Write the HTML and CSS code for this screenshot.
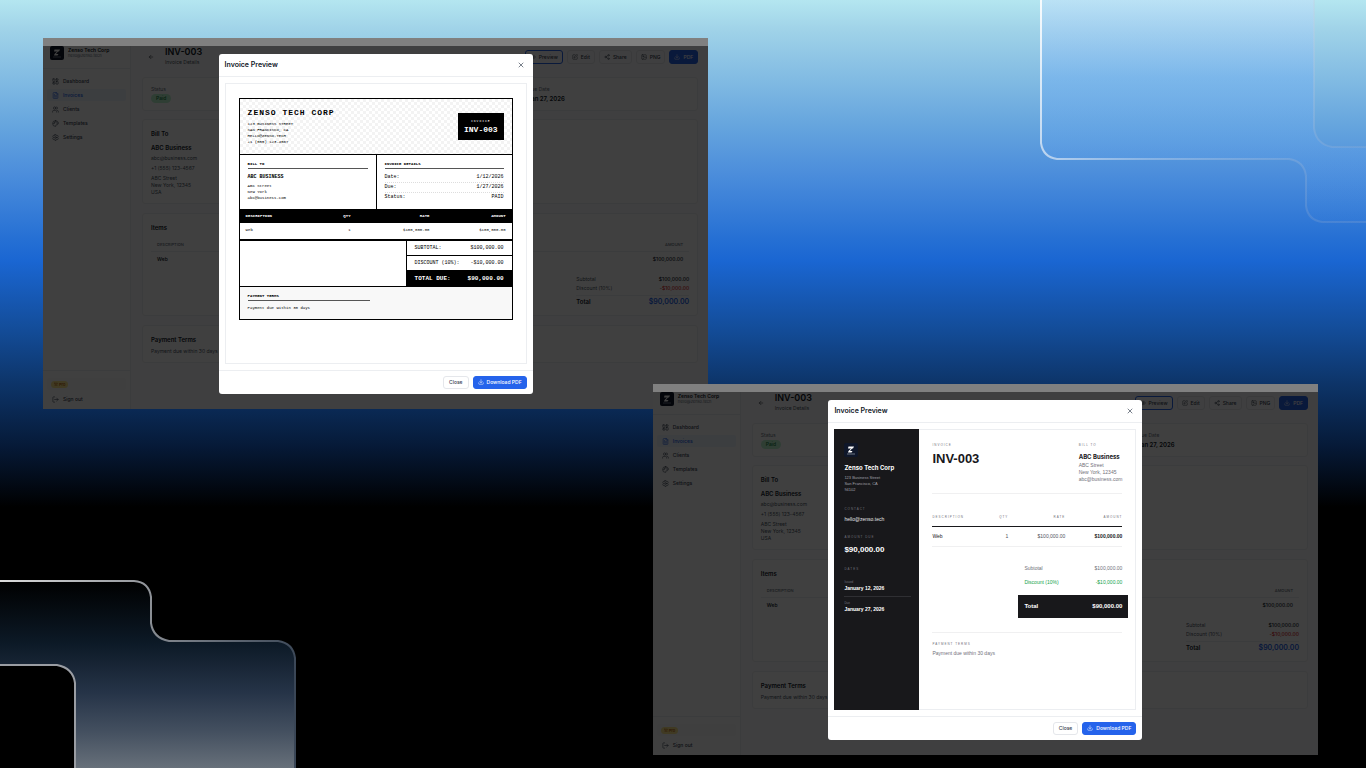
FILE: index.html
```
<!DOCTYPE html>
<html lang="en">
<head>
  <meta charset="UTF-8">
  <meta name="viewport" content="width=device-width, initial-scale=1.0">
  <title>Invoice Preview</title>
  <link rel="stylesheet" href="styles.css">
</head>
<body>
  <svg class="sprite" aria-hidden="true">
    <symbol id="i-dashboard" viewBox="0 0 24 24"><rect x="3" y="3" width="7" height="9" rx="1"/><rect x="14" y="3" width="7" height="5" rx="1"/><rect x="14" y="12" width="7" height="9" rx="1"/><rect x="3" y="16" width="7" height="5" rx="1"/></symbol>
    <symbol id="i-file" viewBox="0 0 24 24"><path d="M15 2H6a2 2 0 0 0-2 2v16a2 2 0 0 0 2 2h12a2 2 0 0 0 2-2V7z"/><path d="M14 2v5h6M9 9H8M16 13H8M16 17H8"/></symbol>
    <symbol id="i-users" viewBox="0 0 24 24"><path d="M16 21v-2a4 4 0 0 0-4-4H6a4 4 0 0 0-4 4v2"/><circle cx="9" cy="7" r="4"/><path d="M22 21v-2a4 4 0 0 0-3-3.9M16 3.1a4 4 0 0 1 0 7.8"/></symbol>
    <symbol id="i-palette" viewBox="0 0 24 24"><path d="M12 2a10 10 0 0 0 0 20c1 0 1.700-.7 1.700-1.700 0-.4-.2-.8-.4-1.100-.3-.3-.4-.7-.4-1.100a1.600 1.600 0 0 1 1.600-1.700h2c3 0 5.500-2.500 5.500-5.500C22 6 17.500 2 12 2z"/><circle cx="13.500" cy="6.500" r=".5"/><circle cx="17.500" cy="10.500" r=".5"/><circle cx="8.500" cy="7.500" r=".5"/><circle cx="6.500" cy="12.500" r=".5"/></symbol>
    <symbol id="i-settings" viewBox="0 0 24 24"><path d="M10 2h4l.6 3 2 1.200 3-1 2 3.500-2.300 2v2.600l2.300 2-2 3.500-3-1-2 1.200-.6 3h-4l-.6-3-2-1.200-3 1-2-3.500 2.300-2v-2.600l-2.300-2 2-3.500 3 1 2-1.200z"/><circle cx="12" cy="12" r="3"/></symbol>
    <symbol id="i-logout" viewBox="0 0 24 24"><path d="M9 21H5a2 2 0 0 1-2-2V5a2 2 0 0 1 2-2h4M16 17l5-5-5-5M21 12H9"/></symbol>
    <symbol id="i-back" viewBox="0 0 24 24"><path d="m12 19-7-7 7-7M19 12H5"/></symbol>
    <symbol id="i-eye" viewBox="0 0 24 24"><path d="M2 12s3.500-7 10-7 10 7 10 7-3.500 7-10 7-10-7-10-7z"/><circle cx="12" cy="12" r="3"/></symbol>
    <symbol id="i-edit" viewBox="0 0 24 24"><path d="M12 3H5a2 2 0 0 0-2 2v14a2 2 0 0 0 2 2h14a2 2 0 0 0 2-2v-7"/><path d="M18.400 2.600a2.100 2.100 0 0 1 3 3L12 15l-4 1 1-4z"/></symbol>
    <symbol id="i-share" viewBox="0 0 24 24"><circle cx="18" cy="5" r="3"/><circle cx="6" cy="12" r="3"/><circle cx="18" cy="19" r="3"/><path d="m8.600 13.500 6.800 4M15.400 6.500l-6.800 4"/></symbol>
    <symbol id="i-image" viewBox="0 0 24 24"><rect x="3" y="3" width="18" height="18" rx="2"/><circle cx="9" cy="9" r="2"/><path d="m21 15-3-3a2 2 0 0 0-3 0l-9 9"/></symbol>
    <symbol id="i-download" viewBox="0 0 24 24"><path d="M21 15v4a2 2 0 0 1-2 2H5a2 2 0 0 1-2-2v-4M7 10l5 5 5-5M12 15V3"/></symbol>
    <symbol id="i-crown" viewBox="0 0 24 24"><path d="m2 5 4 11h12l4-11-6 6-4-8-4 8zM5 21h14"/></symbol>
    <symbol id="i-close" viewBox="0 0 24 24"><path d="M18 6 6 18M6 6l12 12"/></symbol>
    <symbol id="i-logo" viewBox="0 0 28 28"><path class="logo-mark" d="M9 7h11l-2 4h-2l-4 5h5l-2 3H8l1-3 5-5H8z"/><path class="logo-line" d="M6 22h16"/></symbol>
  </svg>

  <svg class="decor decor-top" width="326" height="224" viewBox="0 0 326 224" aria-hidden="true">
    <defs>
      <linearGradient id="topFill" x1="0" y1="0" x2="0" y2="1">
        <stop offset="0" stop-color="#c2dcfb" stop-opacity=".45"/>
        <stop offset=".35" stop-color="#74b2f2" stop-opacity=".5"/>
        <stop offset="1" stop-color="#4a90e8" stop-opacity=".05"/>
      </linearGradient>
      <linearGradient id="topLine" gradientUnits="userSpaceOnUse" x1="0" y1="0" x2="300" y2="170">
        <stop offset="0" stop-color="#fff" stop-opacity=".9"/>
        <stop offset=".5" stop-color="#d5e0ee" stop-opacity=".4"/>
        <stop offset="1" stop-color="#a9b7cf" stop-opacity=".2"/>
      </linearGradient>
    </defs>
    <path fill="url(#topFill)" d="M0 0V143Q2 157 17 159H249Q264 161 266 176V206Q268 220 282 222H326V147H292Q276 144 274 128V0z"/>
    <path class="decor-line" stroke="url(#topLine)" d="M1 0V143Q3 157 17 159H249Q264 161 266 176V206Q268 220 282 222H326M274 0V128Q276 144 292 147H326"/>
  </svg>

  <svg class="decor decor-bottom" width="297" height="189" viewBox="0 0 297 189" aria-hidden="true">
    <defs>
      <linearGradient id="botFill" x1="0" y1="0" x2="0" y2="1">
        <stop offset="0" stop-color="#000"/>
        <stop offset=".33" stop-color="#0c1926"/>
        <stop offset=".6" stop-color="#263448"/>
        <stop offset=".8" stop-color="#434f5f"/>
        <stop offset="1" stop-color="#67707a"/>
      </linearGradient>
      <linearGradient id="botLine" gradientUnits="userSpaceOnUse" x1="0" y1="0" x2="297" y2="90">
        <stop offset="0" stop-color="#dcdcdc"/>
        <stop offset=".5" stop-color="#8a8e94"/>
        <stop offset="1" stop-color="#3a4656"/>
      </linearGradient>
    </defs>
    <path fill="url(#botFill)" d="M0 2H134Q149 3 151 18V44Q153 59 169 62H278Q293 64 295 79V189H75V104Q73 89 57 86H0z"/>
    <path class="decor-line" stroke="url(#botLine)" d="M0 2H134Q149 3 151 18V44Q153 59 169 62H278Q293 64 295 79V189"/>
    <path class="decor-line" stroke="#9a9da3" d="M0 86H57Q73 89 75 104V189"/>
  </svg>

  <template id="appShell">
    <div class="strip"></div>
    <div class="shell">
      <aside class="sidebar">
        <div class="brand">
          <svg class="logo"><use href="#i-logo"/></svg>
          <div>
            <div class="brand-name">Zenso Tech Corp</div>
            <div class="brand-mail">hello@zenso.tech</div>
          </div>
        </div>
        <nav class="nav">
          <a href="#"><svg class="icon"><use href="#i-dashboard"/></svg>Dashboard</a>
          <a href="#" class="active"><svg class="icon"><use href="#i-file"/></svg>Invoices</a>
          <a href="#"><svg class="icon"><use href="#i-users"/></svg>Clients</a>
          <a href="#"><svg class="icon"><use href="#i-palette"/></svg>Templates</a>
          <a href="#"><svg class="icon"><use href="#i-settings"/></svg>Settings</a>
        </nav>
        <div class="sidebar-foot">
          <div class="plan"><span class="pro"><svg class="icon"><use href="#i-crown"/></svg>Pro</span></div>
          <button class="signout"><svg class="icon"><use href="#i-logout"/></svg>Sign out</button>
        </div>
      </aside>
      <main class="main">
        <header class="page-head">
          <a href="#" class="back" aria-label="Back"><svg class="icon"><use href="#i-back"/></svg></a>
          <div class="page-title">
            <h1>INV-003</h1>
            <p>Invoice Details</p>
          </div>
          <div class="actions">
            <button class="btn focused"><svg class="icon"><use href="#i-eye"/></svg>Preview</button>
            <button class="btn"><svg class="icon"><use href="#i-edit"/></svg>Edit</button>
            <button class="btn"><svg class="icon"><use href="#i-share"/></svg>Share</button>
            <button class="btn"><svg class="icon"><use href="#i-image"/></svg>PNG</button>
            <button class="btn primary"><svg class="icon"><use href="#i-download"/></svg>PDF</button>
          </div>
        </header>
        <section class="card facts">
          <div>
            <div class="fact-label">Status</div>
            <span class="paid">Paid</span>
          </div>
          <div>
            <div class="fact-label">Due Date</div>
            <div class="fact-value">Jan 27, 2026</div>
          </div>
        </section>
        <section class="card">
          <h2>Bill To</h2>
          <div class="client">ABC Business</div>
          <div class="line">abc@business.com</div>
          <div class="line">+1 (555) 123-4567</div>
          <div class="line">ABC Street<br>New York, 12345<br>USA</div>
        </section>
        <section class="card">
          <h2>Items</h2>
          <table class="items">
            <thead><tr><th>DESCRIPTION</th><th class="num">AMOUNT</th></tr></thead>
            <tbody><tr><td>Web</td><td class="num">$100,000.00</td></tr></tbody>
          </table>
          <div class="sums">
            <div><span>Subtotal</span><b>$100,000.00</b></div>
            <div><span>Discount (10%)</span><b class="minus">-$10,000.00</b></div>
            <div class="sum-total"><span>Total</span><b>$90,000.00</b></div>
          </div>
        </section>
        <section class="card">
          <h2>Payment Terms</h2>
          <div class="line">Payment due within 30 days</div>
        </section>
      </main>
    </div>
  </template>

  <div class="window window-a">
    <div class="overlay">
      <div class="modal" role="dialog" aria-label="Invoice Preview">
        <header class="modal-head">
          <h3>Invoice Preview</h3>
          <button class="close" aria-label="Close preview"><svg class="icon"><use href="#i-close"/></svg></button>
        </header>
        <div class="modal-body">
          <div class="frame">
            <article class="mono">
              <header class="mono-head">
                <div>
                  <div class="mono-company">ZENSO TECH CORP</div>
                  <div class="mono-text">123 BUSINESS STREET<br>SAN FRANCISCO, CA<br>HELLO@ZENSO.TECH<br>+1 (555) 123-4567</div>
                </div>
                <div class="mono-badge">
                  <div class="mono-badge-label">INVOICE</div>
                  <div class="mono-badge-no">INV-003</div>
                </div>
              </header>
              <div class="mono-info">
                <div>
                  <div class="mono-label">BILL TO</div>
                  <div class="mono-client">ABC BUSINESS</div>
                  <div class="mono-text">ABC Street<br>New York<br>abc@business.com</div>
                </div>
                <div>
                  <div class="mono-label">INVOICE DETAILS</div>
                  <div class="mono-row"><span>Date:</span><span>1/12/2026</span></div>
                  <div class="mono-row"><span>Due:</span><span>1/27/2026</span></div>
                  <div class="mono-row"><span>Status:</span><span>PAID</span></div>
                </div>
              </div>
              <table class="mono-items">
                <thead><tr><th class="desc">DESCRIPTION</th><th class="qty">QTY</th><th class="rate">RATE</th><th>AMOUNT</th></tr></thead>
                <tbody><tr><td>Web</td><td>1</td><td>$100,000.00</td><td>$100,000.00</td></tr></tbody>
              </table>
              <div class="mono-sums">
                <div><span>SUBTOTAL:</span><span>$100,000.00</span></div>
                <div><span>DISCOUNT (10%):</span><span>-$10,000.00</span></div>
                <div class="mono-due"><span>TOTAL DUE:</span><span>$90,000.00</span></div>
              </div>
              <footer class="mono-foot">
                <div class="mono-label">PAYMENT TERMS</div>
                <div class="mono-text">Payment due within 30 days</div>
              </footer>
            </article>
          </div>
        </div>
        <footer class="modal-foot">
          <button class="btn">Close</button>
          <button class="btn primary"><svg class="icon"><use href="#i-download"/></svg>Download PDF</button>
        </footer>
      </div>
    </div>
  </div>

  <div class="window window-b">
    <div class="overlay">
      <div class="modal" role="dialog" aria-label="Invoice Preview">
        <header class="modal-head">
          <h3>Invoice Preview</h3>
          <button class="close" aria-label="Close preview"><svg class="icon"><use href="#i-close"/></svg></button>
        </header>
        <div class="modal-body">
          <div class="frame split">
            <aside class="dark">
              <svg class="logo"><use href="#i-logo"/></svg>
              <div class="dark-name">Zenso Tech Corp</div>
              <div class="dark-address">123 Business Street<br>San Francisco, CA<br>94102</div>
              <div class="dark-block">
                <div class="eyebrow">CONTACT</div>
                <div class="dark-mail">hello@zenso.tech</div>
              </div>
              <div class="dark-block">
                <div class="eyebrow">AMOUNT DUE</div>
                <div class="dark-amount">$90,000.00</div>
              </div>
              <div class="dark-block">
                <div class="eyebrow">DATES</div>
                <div class="dark-date"><span>Issued</span><b>January 12, 2026</b></div>
                <div class="dark-date"><span>Due</span><b>January 27, 2026</b></div>
              </div>
            </aside>
            <article class="sheet">
              <header class="sheet-head">
                <div>
                  <div class="eyebrow">INVOICE</div>
                  <div class="sheet-no">INV-003</div>
                </div>
                <div>
                  <div class="eyebrow">BILL TO</div>
                  <div class="sheet-client">ABC Business</div>
                  <div class="sheet-text">ABC Street<br>New York, 12345<br>abc@business.com</div>
                </div>
              </header>
              <table class="sheet-items">
                <thead><tr><th class="desc">DESCRIPTION</th><th class="qty">QTY</th><th class="rate">RATE</th><th>AMOUNT</th></tr></thead>
                <tbody><tr><td>Web</td><td>1</td><td>$100,000.00</td><td>$100,000.00</td></tr></tbody>
              </table>
              <div class="sheet-sums">
                <div><span>Subtotal</span><span>$100,000.00</span></div>
                <div class="off"><span>Discount (10%)</span><span>-$10,000.00</span></div>
                <div class="sheet-total"><span>Total</span><span>$90,000.00</span></div>
              </div>
              <footer class="sheet-foot">
                <div class="eyebrow">PAYMENT TERMS</div>
                <div class="sheet-text">Payment due within 30 days</div>
              </footer>
            </article>
          </div>
        </div>
        <footer class="modal-foot">
          <button class="btn">Close</button>
          <button class="btn primary"><svg class="icon"><use href="#i-download"/></svg>Download PDF</button>
        </footer>
      </div>
    </div>
  </div>

  <script>
    // both windows show the same invoice page behind the dialog
    const shell = document.getElementById("appShell");
    document.querySelectorAll(".window").forEach(win => {
      win.prepend(shell.content.cloneNode(true));
    });
  </script>
</body>
</html>
```
FILE: styles.css
```
* {
  box-sizing: border-box;
}
body {
  margin: 0;
  min-height: 100vh;
  position: relative;
  overflow: hidden;
  font-family: Inter, "Liberation Sans", sans-serif;
  font-size: 5px;
  line-height: 7px;
  color: #111827;
  background: linear-gradient(180deg, #b4e6f0 0%, #9fd2e8 4%, #67a6de 16%, #4a8cdb 23%, #2670d4 31%, #1a66d2 34%, #134c98 43%, #0d3468 50%, #061a38 58%, #000 66%);
}
h1, h2, h3, p {
  margin: 0;
}
table {
  width: 100%;
  border-collapse: collapse;
}
button {
  font: inherit;
  color: inherit;
  background: none;
  border: 0;
  padding: 0;
  cursor: pointer;
}
a {
  color: inherit;
  text-decoration: none;
}
.sprite {
  display: none;
}
.icon {
  width: 6px;
  height: 6px;
  flex: none;
  fill: none;
  stroke: currentColor;
  stroke-width: 2;
  stroke-linecap: round;
  stroke-linejoin: round;
}
.logo {
  display: block;
  width: 14px;
  height: 14px;
  flex: none;
  border-radius: 2px;
  background: #0f172a;
}
.logo-mark {
  fill: #fff;
}
.logo-line {
  stroke: #cbd5e1;
  stroke-width: 1;
}

/* background shapes */
.decor {
  position: absolute;
}
.decor-top {
  top: 0;
  right: 0;
}
.decor-bottom {
  left: 0;
  bottom: 0;
}
.decor-line {
  fill: none;
  stroke-width: 2;
}

/* windows */
.window {
  position: absolute;
  width: 48.7%;
  background: #fff;
}
.window-a {
  left: 43px;
  top: 38px;
}
.window-b {
  right: 48px;
  top: 384px;
}
.strip {
  height: 8px;
  position: relative;
  z-index: 1;
  background: #808080;
}
.shell {
  display: grid;
  grid-template-columns: 88px 1fr;
}
.overlay {
  position: absolute;
  inset: 0;
  display: flex;
  align-items: center;
  justify-content: center;
  background: rgba(0, 0, 0, 0.75);
}
.modal {
  position: relative;
  z-index: 2;
  width: 314px;
  background: #fff;
  border-radius: 3px;
}

/* sidebar */
.sidebar {
  display: flex;
  flex-direction: column;
  border-right: 1px solid #eceef1;
}
.brand {
  display: flex;
  gap: 4px;
  padding: 0 7px 8px;
  border-bottom: 1px solid #eceef1;
}
.brand-name {
  font-weight: 600;
  line-height: 6px;
  padding-top: 1px;
}
.brand-mail {
  font-size: 4px;
  line-height: 6px;
  color: #6b7280;
}
.nav {
  display: flex;
  flex-direction: column;
  gap: 2px;
  padding: 6px 4px;
}
.nav a, .signout {
  display: flex;
  align-items: center;
  gap: 4px;
  height: 12px;
  padding: 0 5px;
  border-radius: 2px;
  font-weight: 500;
  color: #374151;
}
.nav .icon, .signout .icon {
  width: 7px;
  height: 7px;
}
.nav .active {
  background: #eff6ff;
  color: #2563eb;
}
.sidebar-foot {
  margin-top: auto;
  padding: 7px 4px 4px;
  border-top: 1px solid #eceef1;
}
.plan {
  display: flex;
  align-items: center;
  height: 12px;
  margin-bottom: 3px;
  padding: 0 4px;
  border-radius: 2px;
  background: #f9fafb;
}
.pro {
  display: flex;
  align-items: center;
  gap: 1px;
  padding: 0 3px;
  border-radius: 4px;
  font-size: 4px;
  font-weight: 500;
  background: #fde68a;
  color: #b45309;
}
.pro .icon {
  width: 4px;
  height: 4px;
}

/* page */
.main {
  padding: 0 10px 37px 11px;
  background: #fcfcfd;
}
.page-head {
  display: flex;
  align-items: center;
  gap: 11px;
  padding-left: 6px;
  margin-bottom: 9px;
}
.page-title {
  flex: 1;
}
.page-title h1 {
  font-size: 9px;
  line-height: 11px;
  font-weight: 600;
}
.page-title p {
  line-height: 11px;
  color: #4b5563;
}
.back {
  display: flex;
}
.actions {
  display: flex;
  gap: 4px;
}
.btn {
  display: flex;
  align-items: center;
  gap: 3px;
  height: 14px;
  padding: 0 4px;
  border: 1px solid #e5e7eb;
  border-radius: 3px;
  font-weight: 500;
  color: #374151;
}
.btn.focused {
  border-color: #2563eb;
}
.btn.primary {
  border-color: #2563eb;
  background: #2563eb;
  color: #fff;
}
.card {
  margin-bottom: 9px;
  padding: 8px 8px 7px;
  border: 1px solid #eceef1;
  border-radius: 3px;
  background: #fff;
}
.facts {
  display: grid;
  grid-template-columns: 7fr 3fr;
  margin-bottom: 8px;
}
.fact-label {
  margin-bottom: 1px;
  font-size: 5px;
  color: #6b7280;
}
.fact-value {
  font-size: 6px;
  line-height: 9px;
  font-weight: 600;
}
.paid {
  display: block;
  width: fit-content;
  padding: 0 5px;
  border-radius: 5px;
  line-height: 9px;
  font-weight: 500;
  background: #bbf7d0;
  color: #15803d;
}
.card h2 {
  font-size: 6px;
  line-height: 11px;
  font-weight: 600;
}
.client {
  margin-top: 5px;
  font-size: 6px;
  font-weight: 600;
  line-height: 8px;
}
.line {
  margin-top: 3px;
  color: #4b5563;
}
.items {
  margin-top: 5px;
}
.items th, .items td {
  height: 16px;
  padding: 0 6px;
  text-align: left;
  font-weight: 500;
}
.items th {
  height: 13px;
  font-size: 4px;
  color: #6b7280;
  border-bottom: 1px solid #eceef1;
}
.items .num {
  text-align: right;
}
.sums {
  width: 113px;
  margin: 8px 0 0 auto;
  line-height: 9px;
  color: #4b5563;
}
.sums div {
  display: flex;
  justify-content: space-between;
}
.sums b {
  font-weight: 500;
  color: #111827;
}
.sums .minus {
  color: #dc2626;
}
.sums .sum-total {
  margin-top: 2px;
  border-top: 1px solid #eceef1;
  font-size: 6px;
  line-height: 12px;
  font-weight: 600;
  color: #111827;
}
.sums .sum-total b {
  font-size: 7px;
  font-weight: 600;
  color: #2563eb;
}

/* dialog */
.modal-head {
  display: flex;
  align-items: center;
  justify-content: space-between;
  height: 23px;
  padding: 0 8px 0 6px;
  border-bottom: 1px solid #eceef1;
}
.modal-head h3 {
  font-size: 7px;
  font-weight: 600;
}
.close {
  display: flex;
  color: #374151;
}
.close .icon {
  width: 8px;
  height: 8px;
}
.modal-body {
  padding: 6px;
}
.frame {
  min-height: 281px;
  border: 1px solid #eceef1;
}
.modal-foot {
  display: flex;
  justify-content: flex-end;
  gap: 4px;
  padding: 5px 6px;
  border-top: 1px solid #eceef1;
}
.modal-foot .btn {
  height: 13px;
  padding: 0 5px;
}
.modal-foot .primary {
  padding: 0 4px;
}

/* monospace invoice */
.mono {
  margin: 14px 13px;
  border: 1px solid #000;
  font-family: "Courier New", "Liberation Mono", monospace;
  color: #000;
}
.mono-head {
  display: flex;
  align-items: center;
  justify-content: space-between;
  padding: 9px 8px;
  border-bottom: 1px solid #000;
  background: repeating-conic-gradient(#f3f3f3 0 25%, #fff 0 50%) 0 0 / 6px 6px;
}
.mono-company {
  margin-bottom: 3px;
  font-size: 8px;
  line-height: 10px;
  font-weight: 700;
  letter-spacing: 1px;
}
.mono-text {
  font-size: 4px;
  line-height: 6px;
}
.mono-badge {
  padding: 5px 6px;
  text-align: center;
  background: #000;
  color: #fff;
}
.mono-badge-label {
  font-size: 3px;
  line-height: 7px;
  letter-spacing: 1px;
}
.mono-badge-no {
  font-size: 8px;
  line-height: 10px;
  font-weight: 700;
}
.mono-info {
  display: grid;
  grid-template-columns: 1fr 1fr;
  border-bottom: 1px solid #000;
}
.mono-info > div {
  padding: 7px 8px;
}
.mono-info > div + div {
  border-left: 1px solid #000;
}
.mono-label {
  margin-bottom: 4px;
  padding-bottom: 1px;
  border-bottom: 1px solid #555;
  font-size: 4px;
  line-height: 5px;
  font-weight: 700;
}
.mono-client {
  margin: 5px 0 2px;
  font-weight: 700;
}
.mono-row {
  display: flex;
  justify-content: space-between;
  line-height: 9px;
  border-bottom: 1px dotted #ddd;
}
.mono-row:last-child {
  border-bottom: 0;
}
.mono-items th, .mono-items td {
  height: 16px;
  padding: 0 6px;
  font-size: 4px;
  text-align: right;
}
.mono-items th {
  height: 13px;
  background: #000;
  color: #fff;
}
.mono-items th:first-child, .mono-items td:first-child,
.sheet-items th:first-child, .sheet-items td:first-child {
  text-align: left;
}
.mono-items .desc {
  width: 29%;
}
.mono-items .qty {
  width: 14%;
}
.mono-items .rate {
  width: 29%;
}
.mono-sums {
  border-top: 2px solid #000;
}
.mono-sums div {
  display: flex;
  justify-content: space-between;
  width: 106px;
  margin-left: auto;
  padding: 0 8px;
  line-height: 14px;
  border-left: 1px solid #000;
  border-bottom: 1px solid #000;
}
.mono-sums .mono-due {
  border-bottom: 0;
  font-size: 6px;
  line-height: 15px;
  font-weight: 700;
  background: #000;
  color: #fff;
}
.mono-foot {
  padding: 7px 8px 8px;
  border-top: 1px solid #000;
  background: #f8f8f8;
}
.mono-foot .mono-label {
  width: 48%;
}

/* split invoice */
.split {
  display: grid;
  grid-template-columns: 84px 1fr;
  font-family: "Liberation Sans", Arial, sans-serif;
}
.eyebrow {
  font-size: 3px;
  line-height: 5px;
  letter-spacing: 1px;
  color: #71717a;
}
.dark {
  margin: -1px 0 -1px -1px;
  padding: 14px 8px 14px 10px;
  background: #18181b;
  color: #fff;
}
.dark-name {
  margin: 6px 0 3px;
  font-family: Inter, "Liberation Sans", sans-serif;
  font-size: 6px;
  line-height: 9px;
  font-weight: 700;
}
.dark-address {
  margin-bottom: 14px;
  font-size: 4px;
  line-height: 6px;
  color: #a1a1aa;
}
.dark-block {
  margin-bottom: 12px;
}
.dark-mail {
  margin-top: 4px;
  color: #e4e4e7;
}
.dark-amount {
  margin-top: 5px;
  font-size: 8px;
  line-height: 10px;
  font-weight: 700;
}
.dark-date {
  padding: 4px 0;
  border-bottom: 1px solid #2f2f33;
}
.dark .eyebrow + .dark-date {
  margin-top: 4px;
}
.dark-date:last-child {
  border-bottom: 0;
}
.dark-date span {
  display: block;
  font-size: 3px;
  line-height: 5px;
  color: #71717a;
}
.dark-date b {
  display: block;
  font-size: 5px;
  font-weight: 700;
}
.sheet {
  padding: 13px;
  color: #18181b;
}
.sheet-head {
  display: flex;
  justify-content: space-between;
  padding-bottom: 10px;
  border-bottom: 1px solid #f0f0f1;
}
.sheet-no {
  margin-top: 4px;
  font-size: 13px;
  line-height: 14px;
  font-weight: 700;
}
.sheet-client {
  margin: 4px 0 1px;
  font-family: Inter, "Liberation Sans", sans-serif;
  font-size: 6px;
  line-height: 9px;
  font-weight: 700;
}
.sheet-text {
  color: #71717a;
}
.sheet-items {
  margin-top: 16px;
}
.sheet-items th, .sheet-items td {
  height: 20px;
  padding: 0;
  text-align: right;
  font-weight: 400;
  color: #52525b;
  border-bottom: 1px solid #f0f0f1;
}
.sheet-items th {
  height: 17px;
  font-size: 3px;
  letter-spacing: 1px;
  color: #71717a;
  border-bottom: 1px solid #18181b;
}
.sheet-items td:first-child {
  color: #18181b;
}
.sheet-items td:last-child {
  font-weight: 700;
  color: #18181b;
}
.sheet-items .desc {
  width: 28%;
}
.sheet-items .qty {
  width: 12%;
}
.sheet-items .rate {
  width: 30%;
}
.sheet-sums {
  width: 98px;
  margin: 14px 0 14px auto;
  line-height: 14px;
  color: #71717a;
}
.sheet-sums div {
  display: flex;
  justify-content: space-between;
}
.sheet-sums .off {
  color: #16a34a;
}
.sheet-sums .sheet-total {
  margin: 6px -6px 0;
  padding: 0 6px;
  font-size: 6px;
  line-height: 23px;
  font-weight: 700;
  background: #18181b;
  color: #fff;
}
.sheet-foot {
  padding-top: 9px;
  border-top: 1px solid #f0f0f1;
}
.sheet-foot .sheet-text {
  margin-top: 3px;
}
```
